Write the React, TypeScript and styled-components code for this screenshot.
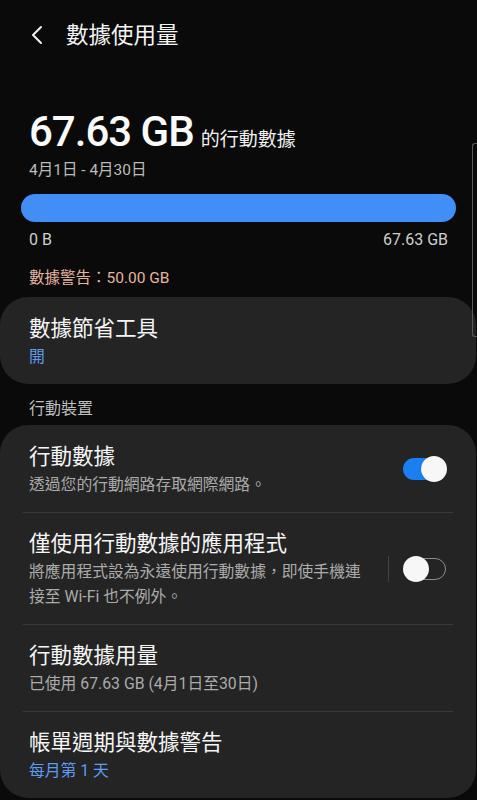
import React from "react";
import styled, { createGlobalStyle } from "styled-components";

const Global = createGlobalStyle`
  html, body { margin: 0; padding: 0; background: #0a0a0a; }
  body { font-family: Roboto, "Noto Sans CJK TC", sans-serif; color: #f2f2f2; }
  * { box-sizing: border-box; }
`;

const Screen = styled.div`
  position: relative;
  width: 477px;
  height: 800px;
  overflow: hidden;
  background: #0a0a0a;
  display: flex;
  flex-direction: column;
`;

const TopBar = styled.header`
  height: 66px;
  padding-top: 4px;
  display: flex;
  align-items: center;
  padding-left: 28px;
  gap: 20px;
`;

const BackButton = styled.button`
  width: 18px;
  height: 24px;
  padding: 0;
  border: 0;
  background: none;
  display: flex;
  align-items: center;
  justify-content: center;
`;

const PageTitle = styled.h1`
  margin: 0;
  font-size: 22.5px;
  font-weight: 400;
  color: #f5f5f5;
  line-height: 30px;
`;

const Summary = styled.section`
  padding: 40px 0 0;
  display: flex;
  flex-direction: column;
`;

const BigLine = styled.div`
  padding-left: 29px;
  height: 52px;
  font-size: 42px;
  line-height: 52px;
  white-space: nowrap;
`;

const BigNumber = styled.span`
  font-weight: 500;
  letter-spacing: -1px;
  color: #fafafa;
  margin-right: 7px;
`;

const BigSuffix = styled.span`
  font-size: 19px;
  line-height: 20px;
  color: #f0f0f0;
`;

const Muted = styled.div<{ $tone?: string }>`
  font-size: 15.5px;
  line-height: 20px;
  color: ${(p) => p.$tone || "#bcbcbc"};
`;

const DateRange = styled(Muted)`
  padding-left: 29px;
  margin-top: 2px;
`;

const Bar = styled.div`
  margin: 14px 21px 0;
  height: 28px;
  border-radius: 14px;
  background: #408ef6;
`;

const BarLabels = styled.div`
  margin-top: 8px;
  padding: 0 29px;
  display: flex;
  justify-content: space-between;
  font-size: 16px;
  line-height: 20px;
  color: #cfcfcf;
`;

const Warning = styled(Muted)`
  padding-left: 29px;
  margin-top: 18px;
`;

const Card = styled.div<{ $top: number }>`
  margin: ${(p) => p.$top}px 1px 0 0;
  background: #242424;
  border-radius: 28px;
  display: flex;
  flex-direction: column;
`;

const Row = styled.div<{ $minH?: number }>`
  display: flex;
  align-items: center;
  min-height: ${(p) => p.$minH || 86}px;
  padding: 15px 30px 15px 29px;
`;

const RowText = styled.div`
  flex: 1;
  display: flex;
  flex-direction: column;
`;

const RowTitle = styled.div`
  font-size: 21.5px;
  line-height: 31px;
  color: #f5f5f5;
`;

const RowSub = styled.div<{ $accent?: boolean }>`
  font-size: 15.8px;
  line-height: 25px;
  color: ${(p) => (p.$accent ? "#5d9cf0" : "#ababab")};
`;

const Divider = styled.div`
  height: 1px;
  margin: 0 23px;
  background: #3a3a3a;
`;

const SectionLabel = styled.div`
  padding-left: 29px;
  margin-top: 14px;
  font-size: 16px;
  line-height: 22px;
  color: #bdbdbd;
`;

const SplitLine = styled.div`
  width: 1px;
  height: 26px;
  background: #444;
  margin: 0 14px 0 14px;
`;

const Track = styled.div<{ $on: boolean }>`
  position: relative;
  width: 43px;
  height: 22px;
  border-radius: 11px;
  flex-shrink: 0;
  background: ${(p) => (p.$on ? "#1a80f2" : "transparent")};
  border: ${(p) => (p.$on ? "none" : "1.5px solid #8c8c8c")};
`;

const Thumb = styled.div<{ $on: boolean }>`
  position: absolute;
  top: 50%;
  ${(p) => (p.$on ? "right: -1px;" : "left: -1.5px;")}
  width: 26px;
  height: 26px;
  margin-top: -13px;
  border-radius: 50%;
  background: #f7f7f7;
  box-shadow: 0 0 1px rgba(0,0,0,0.6);
`;

const ScrollIndicator = styled.div`
  position: absolute;
  right: 0;
  top: 143px;
  width: 5px;
  height: 194px;
  border: 1px solid #5a5a5a;
  border-right: none;
  border-radius: 3px 0 0 3px;
`;

function Toggle({ on }: { on: boolean }) {
  return (
    <Track $on={on}>
      <Thumb $on={on} />
    </Track>
  );
}

export default function App() {
  return (
    <Screen>
      <Global />
      <TopBar>
        <BackButton aria-label="back">
          <svg width="14" height="20" viewBox="0 0 14 20">
            <polyline points="11,2 3,10 11,18" fill="none" stroke="#f2f2f2" strokeWidth="2" strokeLinecap="round" strokeLinejoin="round" />
          </svg>
        </BackButton>
        <PageTitle>數據使用量</PageTitle>
      </TopBar>
      <Summary>
        <BigLine>
          <BigNumber>67.63 GB</BigNumber>
          <BigSuffix>的行動數據</BigSuffix>
        </BigLine>
        <DateRange>4月1日 - 4月30日</DateRange>
        <Bar />
        <BarLabels>
          <span>0 B</span>
          <span>67.63 GB</span>
        </BarLabels>
        <Warning $tone="#e6b5a2">數據警告：50.00 GB</Warning>
      </Summary>

      <Card $top={9}>
        <Row $minH={87}>
          <RowText>
            <RowTitle>數據節省工具</RowTitle>
            <RowSub $accent>開</RowSub>
          </RowText>
        </Row>
      </Card>

      <SectionLabel>行動裝置</SectionLabel>

      <Card $top={5}>
        <Row $minH={87}>
          <RowText>
            <RowTitle>行動數據</RowTitle>
            <RowSub>透過您的行動網路存取網際網路。</RowSub>
          </RowText>
          <Toggle on />
        </Row>
        <Divider />
        <Row>
          <RowText>
            <RowTitle>僅使用行動數據的應用程式</RowTitle>
            <RowSub>將應用程式設為永遠使用行動數據，即使手機連接至 Wi-Fi 也不例外。</RowSub>
          </RowText>
          <SplitLine />
          <Toggle on={false} />
        </Row>
        <Divider />
        <Row>
          <RowText>
            <RowTitle>行動數據用量</RowTitle>
            <RowSub>已使用 67.63 GB (4月1日至30日)</RowSub>
          </RowText>
        </Row>
        <Divider />
        <Row>
          <RowText>
            <RowTitle>帳單週期與數據警告</RowTitle>
            <RowSub $accent>每月第 1 天</RowSub>
          </RowText>
        </Row>
      </Card>
      <ScrollIndicator />
    </Screen>
  );
}
